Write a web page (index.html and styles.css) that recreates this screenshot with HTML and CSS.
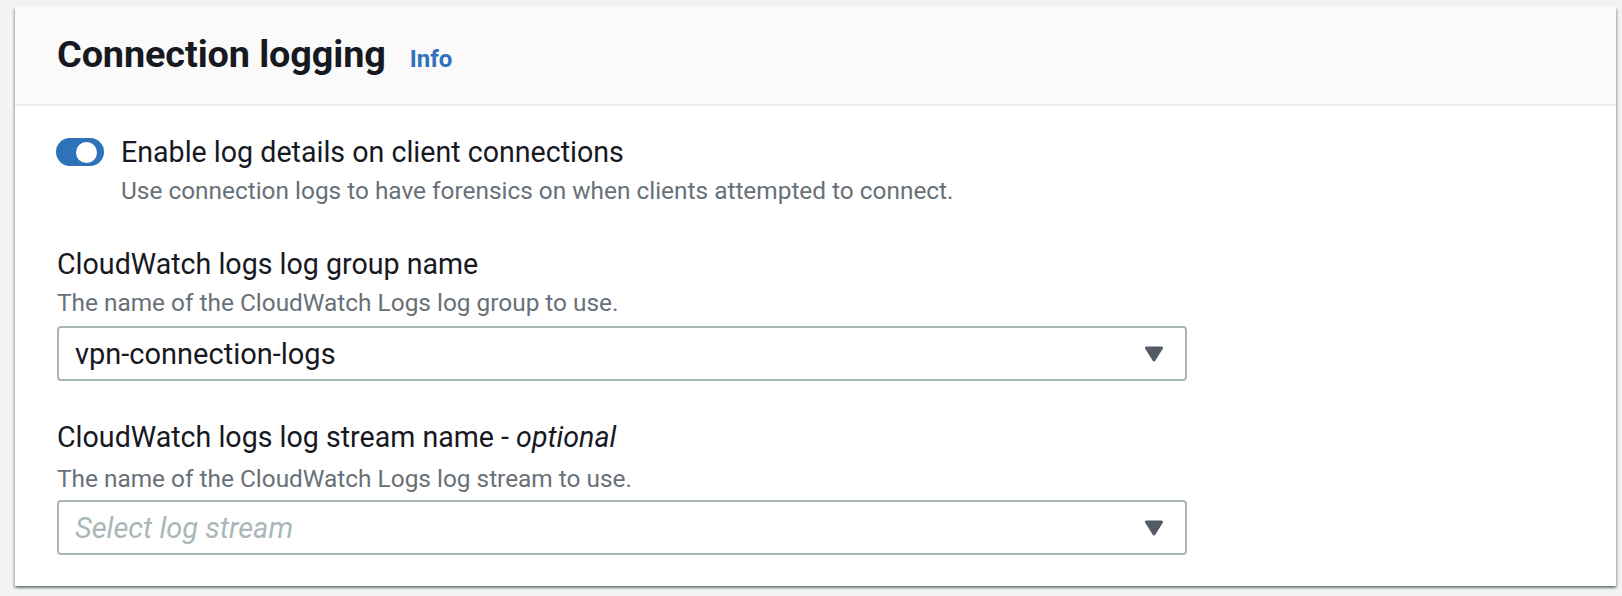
FILE: index.html
```html
<!DOCTYPE html>
<html lang="en">
<head>
<meta charset="utf-8">
<title>Connection logging</title>
<link rel="stylesheet" href="styles.css">
</head>
<body>
<div class="card">
  <div class="card-header">
    <h2 class="title">Connection logging</h2>
    <a class="info" href="#">Info</a>
  </div>
  <div class="card-body">
    <div class="toggle-row">
      <span class="toggle"><span class="knob"></span></span>
      <div class="toggle-text">
        <div class="label">Enable log details on client connections</div>
        <div class="desc">Use connection logs to have forensics on when clients attempted to connect.</div>
      </div>
    </div>
    <div class="field field-group">
      <div class="label">CloudWatch logs log group name</div>
      <div class="desc">The name of the CloudWatch Logs log group to use.</div>
      <div class="select select-1">
        <span class="value">vpn-connection-logs</span>
        <svg class="caret" width="20" height="16" viewBox="0 0 20 16"><path d="M2.5 2 L17.5 2 L10 14 Z" fill="#545b64" stroke="#545b64" stroke-width="3" stroke-linejoin="round"/></svg>
      </div>
    </div>
    <div class="field field-stream">
      <div class="label">CloudWatch logs log stream name - <i>optional</i></div>
      <div class="desc">The name of the CloudWatch Logs log stream to use.</div>
      <div class="select select-2">
        <span class="placeholder">Select log stream</span>
        <svg class="caret" width="20" height="16" viewBox="0 0 20 16"><path d="M2.5 2 L17.5 2 L10 14 Z" fill="#545b64" stroke="#545b64" stroke-width="3" stroke-linejoin="round"/></svg>
      </div>
    </div>
  </div>
</div>
</body>
</html>
```

FILE: styles.css
```css
* { box-sizing: border-box; }
html, body { margin: 0; padding: 0; }
body {
  background: #f2f3f3;
  font-family: Roboto, "Liberation Sans", sans-serif;
  color: #16191f;
  width: 1622px;
  height: 596px;
  overflow: hidden;
  padding: 7px 6px 0 15px;
}
.card {
  background: #ffffff;
  height: 579px;
  box-shadow: 0 2px 2px rgba(0, 28, 36, 0.35), 2px 2px 2px rgba(0, 28, 36, 0.15), -2px 2px 2px rgba(0, 28, 36, 0.15);
  display: flex;
  flex-direction: column;
}
.card-header {
  background: #fafafa;
  border-bottom: 2px solid #eaeded;
  padding: 23px 42px 26px 42px;
  display: flex;
  align-items: baseline;
  gap: 24px;
}
.title {
  margin: 0;
  font-size: 37.8px;
  line-height: 48px;
  font-weight: 700;
  color: #16191f;
  letter-spacing: -0.1px;
}
.info {
  font-size: 24px;
  font-weight: 700;
  color: #2f72ba;
  text-decoration: none;
}
.card-body {
  padding: 26px 42px 0 42px;
}
.toggle-row {
  display: flex;
  align-items: flex-start;
}
.toggle {
  width: 48px;
  height: 28px;
  border-radius: 14px;
  background: #2f72ba;
  margin: 6px 17px 0 -1px;
  display: flex;
  align-items: center;
  justify-content: flex-end;
  padding-right: 7px;
  flex: none;
}
.knob {
  width: 21px;
  height: 21px;
  border-radius: 50%;
  background: #ffffff;
}
.label {
  font-size: 28.6px;
  line-height: 40px;
  color: #16191f;
}
.label i { font-style: italic; }
.desc {
  font-size: 24.4px;
  line-height: 32px;
  color: #687078;
  margin-top: 3px;
}
.field-group { margin-top: 37px; }
.field-stream { margin-top: 36px; }
.field-stream .desc { margin-top: 6px; }
.select {
  width: 1130px;
  height: 55px;
  border: 2px solid #aab7b8;
  border-radius: 4px;
  display: flex;
  align-items: center;
  justify-content: space-between;
  padding: 0 21px 0 16px;
  font-size: 29px;
}
.select-1 { margin-top: 7px; }
.select-2 { margin-top: 5px; }
.value { color: #16191f; }
.placeholder { color: #aab7b8; font-style: italic; }
.caret { display: block; }
```
